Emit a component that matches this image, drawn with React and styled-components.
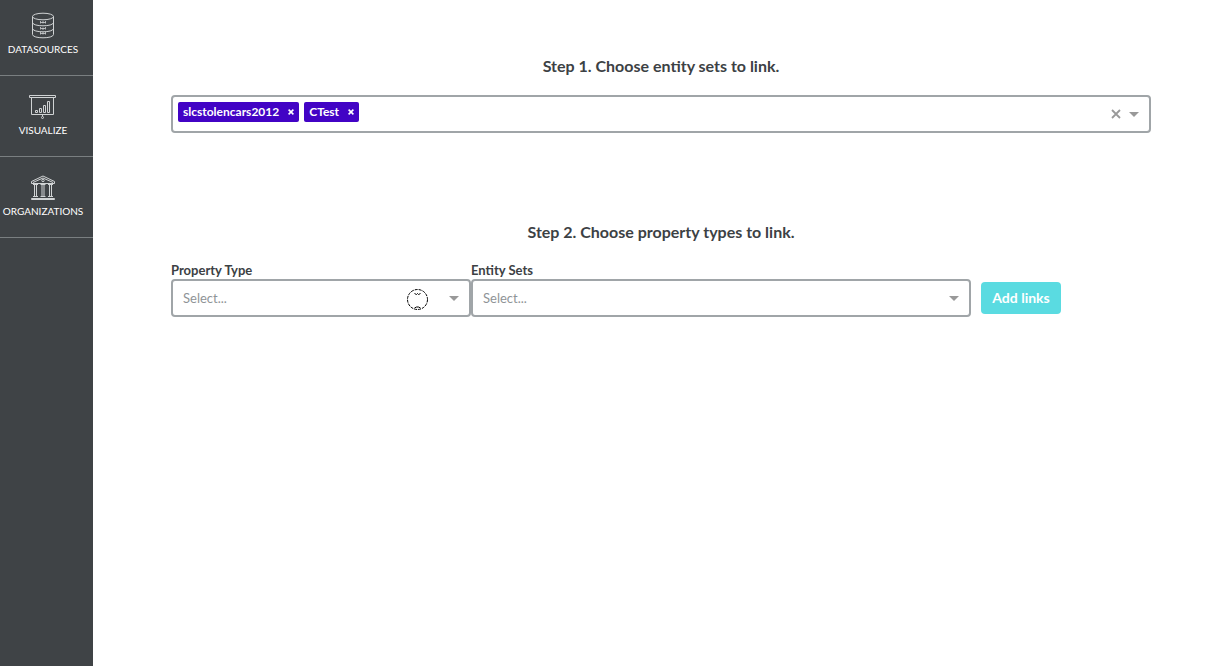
import React, { useState } from "react";
import styled, { createGlobalStyle } from "styled-components";

const GlobalStyle = createGlobalStyle`
  *, *::before, *::after { box-sizing: border-box; }
  body {
    margin: 0;
    background: #fff;
    color: #3c4144;
    font-family: Lato, "Open Sans", sans-serif;
    font-size: 13px;
    line-height: 18px;
  }
  button, input, select { font: inherit; color: inherit; margin: 0; }
`;

const Page = styled.div`
  display: flex;
  min-height: 100vh;
`;

const Sidebar = styled.nav`
  flex: none;
  width: 93px;
  background: #3f4346;
`;

const NavLink = styled.a`
  display: flex;
  flex-direction: column;
  align-items: center;
  height: ${(p) => (p.$first ? "76px" : "81px")};
  padding: ${(p) => (p.$first ? "11px" : "16px")} 7px 0 0;
  border-bottom: 1px solid #7a7f81;
  color: #fff;
  font-size: 10px;
  line-height: 16px;
  text-decoration: none;
  text-transform: uppercase;
`;

const NavIcon = styled.svg`
  flex: none;
  width: 30px;
  height: 30px;
  fill: none;
  stroke: #d0d3d4;
  stroke-width: 1;
`;

const Main = styled.main`
  flex: 1;
  min-width: 0;
  padding: 56px 71px 40px 78px;
`;

const Step = styled.section`
  margin-bottom: 89px;
`;

const StepTitle = styled.h2`
  margin: 0 0 19px;
  font-size: 16px;
  font-weight: 700;
  line-height: 20px;
  text-align: center;
`;

const MultiSelect = styled.div`
  display: flex;
  align-items: center;
  gap: 5px;
  height: 38px;
  padding: 0 10px 0 5px;
  border: 2px solid #a0a5a8;
  border-radius: 4px;
`;

const Tag = styled.span`
  display: flex;
  align-items: center;
  height: 20px;
  padding-left: 5px;
  margin-bottom: 4px;
  border-radius: 2px;
  background: #4203c5;
  color: #fff;
  font-size: 12px;
  font-weight: 700;
`;

const TagRemove = styled.button`
  display: flex;
  align-items: center;
  justify-content: center;
  width: 16px;
  height: 20px;
  margin-left: 4px;
  padding: 0;
  border: 0;
  background: none;
  cursor: pointer;
`;

const TagInput = styled.input`
  flex: 1;
  min-width: 0;
  border: 0;
  outline: 0;
  background: none;
`;

const Controls = styled.div`
  display: flex;
  align-items: center;
  gap: 8px;
`;

const IconButton = styled.button`
  display: flex;
  align-items: center;
  justify-content: center;
  padding: 0;
  border: 0;
  background: none;
  color: #999;
  cursor: pointer;
`;

const LinkForm = styled.form`
  display: flex;
  align-items: flex-end;
`;

const Field = styled.div`
  flex: 0 1 ${(p) => p.$width};
  min-width: 0;
`;

const Label = styled.label`
  display: block;
  font-weight: 700;
`;

const SelectFrame = styled.div`
  position: relative;
  display: grid;
  align-items: center;
`;

const Select = styled.select`
  grid-area: 1 / 1;
  appearance: none;
  width: 100%;
  height: 38px;
  padding: 0 34px 0 10px;
  border: 2px solid #a0a5a8;
  border-radius: 4px;
  background: #fff;
  color: #8f9497;
`;

const SelectArrow = styled.span`
  grid-area: 1 / 1;
  justify-self: end;
  display: flex;
  margin-right: 12px;
  color: #999;
  pointer-events: none;
`;

const Pointer = styled.svg`
  position: absolute;
  top: 9px;
  right: 42px;
  width: 23px;
  height: 23px;
  fill: none;
  stroke: #000;
  pointer-events: none;
`;

const AddButton = styled.button`
  width: 80px;
  height: 32px;
  margin: 0 0 3px 10px;
  padding: 0;
  border: 0;
  border-radius: 4px;
  background: #5adbe1;
  color: #fff;
  font-size: 14px;
  font-weight: 700;
  cursor: pointer;
`;

const DatabaseIcon = () => (
  <NavIcon viewBox="0 0 30 30" aria-hidden="true">
    <ellipse cx="15" cy="5.5" rx="10.5" ry="3.3" />
    <path d="M4.5 5.5v18c0 4.4 21 4.4 21 0v-18M4.5 11.5c0 4.4 21 4.4 21 0M4.5 17.5c0 4.4 21 4.4 21 0" />
    <path
      d="M12.5 10v2.5M15 10v2.5M17.5 10v2.5M12.5 16v2.5M15 16.5v2.5M17.5 16v2.5M12.5 21v2.5M15 21v2.5M17.5 21v2.5M12.5 11.5h5M13 17.5h4M12.5 22.5h5"
      strokeWidth="0.8"
    />
  </NavIcon>
);

const BoardIcon = () => (
  <NavIcon viewBox="0 0 30 30" aria-hidden="true">
    <path d="M1.5 3.5h26v2h-26zM3.5 5.5v17h22v-17M14.5 22.5v2" />
    <circle cx="14.5" cy="25.5" r="1" />
    <path d="M7.5 18.5h2v2h-2zM11.5 16.5h2v4h-2zM15.5 13.5h2v7h-2zM19.5 9.5h2v11h-2z" />
  </NavIcon>
);

const BankIcon = () => (
  <NavIcon viewBox="0 0 30 30" aria-hidden="true">
    <path d="M15 3 3.5 8.5v2h23v-2zM3.5 25.5h23v1h-23zM5 9.5l10-4.5 10 4.5" />
    <circle cx="15" cy="7.5" r="1.2" />
    <path d="M6.5 11v13M8.5 11v13M14 11v13M16 11v13M21.5 11v13M23.5 11v13M5 11.5h5M12.5 11.5h5M20 11.5h5M5 23.5h5M12.5 23.5h5M20 23.5h5" />
  </NavIcon>
);

const Cross = ({ size, weight }) => (
  <svg width={size} height={size} viewBox="0 0 10 10" fill="none" stroke="currentColor" strokeWidth={weight} aria-hidden="true">
    <path d="M1 1l8 8M9 1L1 9" />
  </svg>
);

const Caret = () => (
  <svg width="10" height="5" viewBox="0 0 10 5" fill="currentColor" aria-hidden="true">
    <path d="M0 0h10L5 5z" />
  </svg>
);

const navItems = [
  { label: "Datasources", Icon: DatabaseIcon },
  { label: "Visualize", Icon: BoardIcon },
  { label: "Organizations", Icon: BankIcon },
];

export default function App() {
  const [sets, setSets] = useState(["slcstolencars2012", "CTest"]);

  return (
    <Page>
      <GlobalStyle />
      <Sidebar>
        {navItems.map(({ label, Icon }, i) => (
          <NavLink key={label} href={`#${label.toLowerCase()}`} $first={i === 0}>
            <Icon />
            {label}
          </NavLink>
        ))}
      </Sidebar>
      <Main>
        <Step>
          <StepTitle>Step 1. Choose entity sets to link.</StepTitle>
          <MultiSelect>
            {sets.map((name) => (
              <Tag key={name}>
                {name}
                <TagRemove
                  type="button"
                  aria-label={`Remove ${name}`}
                  onClick={() => setSets(sets.filter((s) => s !== name))}
                >
                  <Cross size={6} weight={2.6} />
                </TagRemove>
              </Tag>
            ))}
            <TagInput aria-label="Entity sets to link" />
            <Controls>
              <IconButton type="button" aria-label="Clear all" onClick={() => setSets([])}>
                <Cross size={10} weight={1.8} />
              </IconButton>
              <IconButton type="button" aria-label="Show entity sets">
                <Caret />
              </IconButton>
            </Controls>
          </MultiSelect>
        </Step>
        <Step>
          <StepTitle>Step 2. Choose property types to link.</StepTitle>
          <LinkForm onSubmit={(e) => e.preventDefault()}>
            <Field $width="300px">
              <Label htmlFor="property-type">Property Type</Label>
              <SelectFrame>
                <Select id="property-type">
                  <option>Select...</option>
                </Select>
                <SelectArrow>
                  <Caret />
                </SelectArrow>
                <Pointer viewBox="0 0 23 23" aria-hidden="true">
                  <circle cx="11.5" cy="11.5" r="10" strokeDasharray="3 1" />
                  <path d="M8.5 5.5l2 1 1-1 1 1 2-1M8.5 20l2-1h2l2 1" />
                </Pointer>
              </SelectFrame>
            </Field>
            <Field $width="500px">
              <Label htmlFor="entity-sets">Entity Sets</Label>
              <SelectFrame>
                <Select id="entity-sets">
                  <option>Select...</option>
                </Select>
                <SelectArrow>
                  <Caret />
                </SelectArrow>
              </SelectFrame>
            </Field>
            <AddButton type="submit">Add links</AddButton>
          </LinkForm>
        </Step>
      </Main>
    </Page>
  );
}
